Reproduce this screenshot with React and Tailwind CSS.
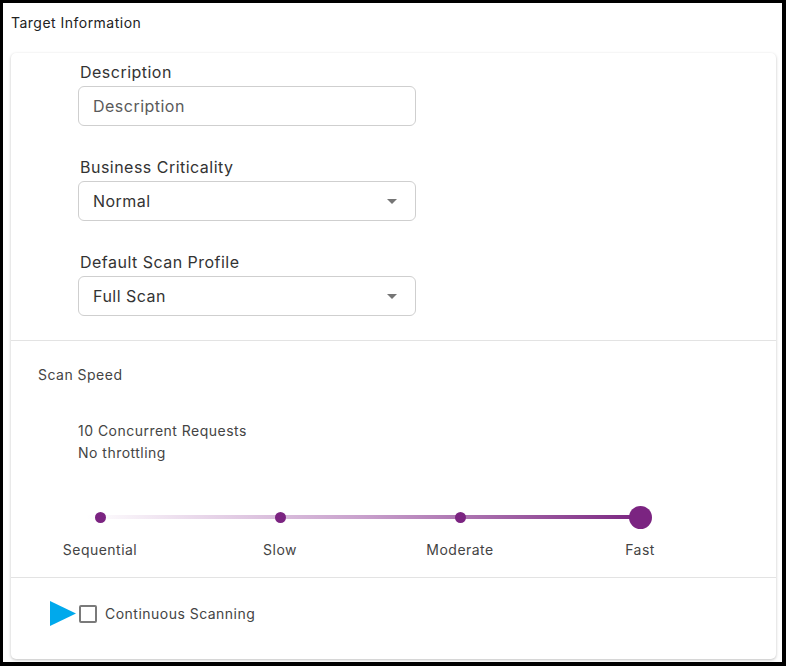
import React from "react";

const font = { fontFamily: "Inter, 'Noto Sans', sans-serif", letterSpacing: "0.03em" };

function Caret() {
  return (
    <svg width="10" height="5" viewBox="0 0 10 5" className="shrink-0">
      <path d="M0 0 L10 0 L5 5 Z" fill="#757575" />
    </svg>
  );
}

function Field({ label, value, select, placeholder }) {
  return (
    <div className="flex flex-col">
      <div className="text-[16px] leading-[20px] text-[#333] pl-[2px] mb-[4px]">{label}</div>
      <div className="w-[338px] h-[40px] border border-[#cfcfcf] rounded-[6px] flex items-center justify-between pl-[14px] pr-[18px] bg-white">
        <span className={"text-[16px] " + (placeholder ? "text-[#5a5a5a]" : "text-[#333]")}>{value}</span>
        {select && <Caret />}
      </div>
    </div>
  );
}

function Stop({ label, big }) {
  return (
    <div className="w-0 flex flex-col items-center">
      <div className="h-[24px] flex items-center justify-center">
        <div className={big ? "w-[23px] h-[23px] rounded-full bg-[#7b2481] shrink-0" : "w-[11px] h-[11px] rounded-full bg-[#7b2481] shrink-0"} />
      </div>
      <div className="mt-[12px] text-[14px] leading-[18px] text-[#444] whitespace-nowrap">{label}</div>
    </div>
  );
}

export default function App() {
  return (
    <div style={font} className="w-[786px] h-[666px] bg-black pt-[3px] pl-[3px] pr-[4px] pb-[4px]">
      <div className="w-full h-full bg-white flex flex-col pl-[8px] pr-[6px] pb-[3px]">
        <div className="h-[38px] flex items-center text-[14px] text-[#222] pt-[1px]">Target Information</div>
        <div className="mt-[12px] flex-1 rounded-[5px] bg-white shadow-[0_1px_3px_rgba(0,0,0,0.25)] flex flex-col">
          <div className="pl-[67px] pt-[9px] pb-[24px] flex flex-col gap-[31px] border-b border-[#e3e3e3]">
            <Field label="Description" value="Description" placeholder />
            <Field label="Business Criticality" value="Normal" select />
            <Field label="Default Scan Profile" value="Full Scan" select />
          </div>
          <div className="h-[237px] border-b border-[#e3e3e3] flex flex-col">
            <div className="pl-[27px] pt-[25px] text-[14px] leading-[18px] text-[#444]">Scan Speed</div>
            <div className="pl-[67px] mt-[36px] text-[14px] leading-[22px] text-[#444]">
              <div>10 Concurrent Requests</div>
              <div>No throttling</div>
            </div>
            <div className="relative ml-[89px] w-[540px] mt-[41px]">
              <div className="absolute left-[-14px] right-0 top-[10px] h-[4px] rounded-full bg-gradient-to-r from-[#ffffff] via-[#c8a0cc] to-[#7b2481]" />
              <div className="relative flex justify-between">
                <Stop label="Sequential" />
                <Stop label="Slow" />
                <Stop label="Moderate" />
                <Stop label="Fast" big />
              </div>
            </div>
          </div>
          <div className="flex-1 flex items-center pl-[39px] pb-[10px]">
            <svg width="26" height="25" viewBox="0 0 26 25" className="shrink-0">
              <path d="M0 0 L26 12.5 L0 25 Z" fill="#00a9ec" />
            </svg>
            <div className="ml-[3px] w-[18px] h-[18px] border-2 border-[#7a7a7a] rounded-[2px] shrink-0" />
            <div className="ml-[8px] text-[14px] text-[#444]">Continuous Scanning</div>
          </div>
        </div>
      </div>
    </div>
  );
}
